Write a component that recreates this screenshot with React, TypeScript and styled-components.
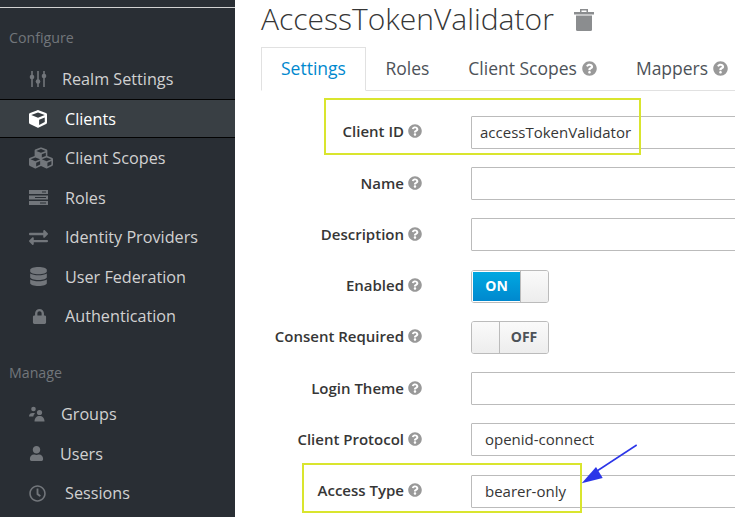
import styled, { createGlobalStyle } from "styled-components";
import type { ReactNode } from "react";
import { FaCube, FaCubes, FaDatabase, FaExchangeAlt, FaLock, FaQuestionCircle, FaRegClock, FaUser } from "react-icons/fa";

const GlobalStyle = createGlobalStyle`
	html, body {
		margin: 0;
		height: 100%;
		overflow: hidden;
		background: #fff;
	}
	body {
		font-family: "Open Sans", "Liberation Sans", sans-serif;
		color: #363636;
	}
`;

const Page = styled.div`
	position: relative;
	display: flex;
	width: 735px;
	height: 517px;
	overflow: hidden;
`;

const Sidebar = styled.aside`
	flex: 0 0 235px;
	background: #292e34;
	box-sizing: border-box;
	padding-top: 7px;
`;

const TopRule = styled.div`
	height: 1px;
	background: #d1d1d1;
`;

const SectionTitle = styled.div<{ $top: number }>`
	margin: ${({ $top }) => $top}px 0 11.3px 9px;
	height: 20px;
	line-height: 20px;
	font-size: 14.2px;
	color: #72767b;
`;

const NavRow = styled.div<{ $active?: boolean }>`
	display: flex;
	align-items: center;
	box-sizing: border-box;
	height: 39.5px;
	padding-left: 29px;
	font-size: 16.2px;
	white-space: nowrap;
	color: ${({ $active }) => ($active ? "#fff" : "#d1d1d1")};
	background: ${({ $active }) => ($active ? "#393f44" : "transparent")};
	border-top: 1px solid ${({ $active }) => ($active ? "#030303" : "transparent")};
	border-bottom: 1px solid ${({ $active }) => ($active ? "#030303" : "transparent")};
`;

const NavIcon = styled.span<{ $slot: number; $active?: boolean }>`
	display: flex;
	align-items: center;
	width: ${({ $slot }) => $slot}px;
	flex: none;
	color: ${({ $active }) => ($active ? "#fff" : "#72767b")};
`;

const Main = styled.main`
	flex: 1;
	min-width: 0;
	padding-left: 26px;
`;

const TitleRow = styled.div`
	display: flex;
	align-items: center;
	height: 38px;
	margin-bottom: 9px;
`;

const Title = styled.h1`
	margin: 0;
	font-size: 30px;
	font-weight: 300;
	line-height: 38px;
	white-space: nowrap;
	color: #363636;
`;

const TrashButton = styled.span`
	display: flex;
	margin-left: 20px;
	margin-top: 2px;
	color: #8b8d8f;
`;

const Tabs = styled.div`
	display: flex;
	height: 43px;
	border-bottom: 1px solid #e1e1e1;
`;

const Tab = styled.div<{ $active?: boolean }>`
	display: flex;
	align-items: center;
	flex: none;
	gap: 5px;
	box-sizing: border-box;
	height: ${({ $active }) => ($active ? "44px" : "43px")};
	padding: 0 ${({ $active }) => ($active ? "19px" : "18.5px")} 2px;
	font-size: 17.5px;
	white-space: nowrap;
	color: ${({ $active }) => ($active ? "#0088ce" : "#4d5258")};
	background: #fff;
	border: 1px solid ${({ $active }) => ($active ? "#e1e1e1" : "transparent")};
	border-bottom: ${({ $active }) => ($active ? "1px solid #fff" : "none")};
`;

const Form = styled.form`
	display: flex;
	flex-direction: column;
	gap: 18.25px;
	margin-top: 24.9px;
`;

const FormRow = styled.div`
	display: flex;
	align-items: center;
	height: 33px;
`;

const Label = styled.label`
	display: flex;
	align-items: center;
	justify-content: flex-end;
	gap: 4px;
	flex: 0 0 161px;
	padding-bottom: 2px;
	font-size: 15px;
	font-weight: 600;
	white-space: nowrap;
	color: #363636;
`;

const HelpIcon = styled.span`
	display: flex;
	color: #999;
`;

const Field = styled.div<{ $pad: number }>`
	box-sizing: border-box;
	flex: none;
	width: 320px;
	height: 33px;
	margin-left: 49px;
	padding-left: ${({ $pad }) => $pad}px;
	line-height: 31px;
	font-size: 15px;
	color: #363636;
	background: #fff;
	border: 1px solid #bbb;
	border-radius: 1px;
`;

const Switch = styled.div`
	display: flex;
	flex: none;
	box-sizing: border-box;
	width: 78px;
	height: 33px;
	margin-left: 49px;
	border: 1px solid #bbb;
	border-radius: 3px;
	overflow: hidden;
`;

const SwitchLabel = styled.div<{ $on?: boolean }>`
	display: flex;
	align-items: center;
	justify-content: center;
	flex: 1;
	padding-bottom: 1px;
	font-size: 14px;
	font-weight: 700;
	color: ${({ $on }) => ($on ? "#fff" : "#4d5258")};
	background: ${({ $on }) => ($on ? "linear-gradient(#00a8e1, #0088ce)" : "linear-gradient(#fafafa, #ededed)")};
	border: ${({ $on }) => ($on ? "2px solid #fff" : "none")};
	border-width: ${({ $on }) => ($on ? "1px 0 1px 1px" : "0")};
`;

const SwitchKnob = styled.div<{ $side: "left" | "right" }>`
	flex: 0 0 27px;
	background: linear-gradient(#fafafa, #ededed);
	border-${({ $side }) => ($side === "left" ? "right" : "left")}: 1px solid #bbb;
`;

const Highlight = styled.div<{ $x: number; $y: number; $w: number; $h: number }>`
	position: absolute;
	left: ${({ $x }) => $x}px;
	top: ${({ $y }) => $y}px;
	width: ${({ $w }) => $w}px;
	height: ${({ $h }) => $h}px;
	box-sizing: border-box;
	border: 2px solid #d9e52e;
	pointer-events: none;
`;

const ArrowOverlay = styled.svg`
	position: absolute;
	left: 575px;
	top: 440px;
`;

const SlidersIcon = () => (
	<svg width="18" height="18" viewBox="0 0 18 18" fill="currentColor">
		<rect x="2.2" y="1" width="1.6" height="16" />
		<rect x="8.2" y="1" width="1.6" height="16" />
		<rect x="14.2" y="1" width="1.6" height="16" />
		<circle cx="3" cy="7" r="2.3" />
		<circle cx="9" cy="11.5" r="2.3" />
		<circle cx="15" cy="6" r="2.3" />
	</svg>
);

const ServerIcon = () => (
	<svg width="19" height="15" viewBox="0 0 19 15" fill="currentColor" fillRule="evenodd">
		<path d="M0 0h19v4H0zM13 1.500v1h4v-1z" />
		<path d="M0 5.500h19v4H0zM6 7v1h11V7z" />
		<path d="M0 11h19v4H0zM11 12.500v1h6v-1z" />
	</svg>
);

const GroupsIcon = () => (
	<svg width="16" height="16" viewBox="0 0 16 16" fill="currentColor">
		<circle cx="4.500" cy="3" r="2.300" />
		<path d="M0 10.500c0-2.500 1.500-3.500 4-3.500 .8 0 1.500.1 2 .4-1 .8-1.500 1.800-1.700 3.100z" />
		<circle cx="10.500" cy="6.500" r="2.600" />
		<path d="M5.500 15.500c0-3.500 2-5.500 5-5.500s5 2 5 5.500z" />
	</svg>
);

const TrashIcon = () => (
	<svg width="20" height="22" viewBox="0 0 20 22" fill="currentColor" fillRule="evenodd">
		<path d="M6 0h8v3.500h-1.500V1.500h-5v2H6z" />
		<path d="M0 3h20v2.500H0z" />
		<path d="M2 6.500h16V20.500a1.500 1.500 0 0 1-1.500 1.500h-13A1.500 1.500 0 0 1 2 20.500z" />
	</svg>
);

type NavItem = { label: string; icon: ReactNode; slot: number; active?: boolean };

const configureItems: NavItem[] = [
	{ label: "Realm Settings", icon: <SlidersIcon />, slot: 33 },
	{ label: "Clients", icon: <FaCube size={18} />, slot: 36, active: true },
	{ label: "Client Scopes", icon: <FaCubes size={24} />, slot: 36 },
	{ label: "Roles", icon: <ServerIcon />, slot: 36 },
	{ label: "Identity Providers", icon: <FaExchangeAlt size={19} />, slot: 36 },
	{ label: "User Federation", icon: <FaDatabase size={19} />, slot: 36 },
	{ label: "Authentication", icon: <FaLock size={15} style={{ marginLeft: 3 }} />, slot: 36 },
];

const manageItems: NavItem[] = [
	{ label: "Groups", icon: <GroupsIcon />, slot: 32 },
	{ label: "Users", icon: <FaUser size={15} />, slot: 31 },
	{ label: "Sessions", icon: <FaRegClock size={17} />, slot: 36 },
];

const Help = () => (
	<HelpIcon>
		<FaQuestionCircle size={14} />
	</HelpIcon>
);

const NavList = ({ items }: { items: NavItem[] }) => (
	<>
		{items.map((item) => (
			<NavRow key={item.label} $active={item.active}>
				<NavIcon $slot={item.slot} $active={item.active}>
					{item.icon}
				</NavIcon>
				{item.label}
			</NavRow>
		))}
	</>
);

const App = () => {
	return (
		<Page>
			<GlobalStyle />
			<Sidebar>
				<TopRule />
				<SectionTitle $top={20}>Configure</SectionTitle>
				<NavList items={configureItems} />
				<SectionTitle $top={27.2}>Manage</SectionTitle>
				<NavList items={manageItems} />
			</Sidebar>
			<Main>
				<TitleRow>
					<Title>AccessTokenValidator</Title>
					<TrashButton>
						<TrashIcon />
					</TrashButton>
				</TitleRow>
				<Tabs>
					<Tab $active>Settings</Tab>
					<Tab>Roles</Tab>
					<Tab>
						Client Scopes <FaQuestionCircle size={15} color="#999" />
					</Tab>
					<Tab>
						Mappers <FaQuestionCircle size={15} color="#999" />
					</Tab>
				</Tabs>
				<Form>
					<FormRow>
						<Label>
							Client ID <Help />
						</Label>
						<Field $pad={8}>accessTokenValidator</Field>
					</FormRow>
					<FormRow>
						<Label>
							Name <Help />
						</Label>
						<Field $pad={8} />
					</FormRow>
					<FormRow>
						<Label>
							Description <Help />
						</Label>
						<Field $pad={8} />
					</FormRow>
					<FormRow>
						<Label>
							Enabled <Help />
						</Label>
						<Switch>
							<SwitchLabel $on>ON</SwitchLabel>
							<SwitchKnob $side="right" />
						</Switch>
					</FormRow>
					<FormRow>
						<Label>
							Consent Required <Help />
						</Label>
						<Switch>
							<SwitchKnob $side="left" />
							<SwitchLabel>OFF</SwitchLabel>
						</Switch>
					</FormRow>
					<FormRow>
						<Label>
							Login Theme <Help />
						</Label>
						<Field $pad={8} />
					</FormRow>
					<FormRow>
						<Label>
							Client Protocol <Help />
						</Label>
						<Field $pad={13}>openid-connect</Field>
					</FormRow>
					<FormRow>
						<Label>
							Access Type <Help />
						</Label>
						<Field $pad={13}>bearer-only</Field>
					</FormRow>
				</Form>
			</Main>
			<Highlight $x={324} $y={98} $w={317} $h={57} />
			<Highlight $x={302} $y={463} $w={280} $h={50} />
			<ArrowOverlay width="70" height="50" viewBox="0 0 70 50">
				<line x1="61.7" y1="5" x2="22" y2="31" stroke="#2b35e8" strokeWidth="1.5" />
				<polygon points="6.700,43.300 21,27 27.700,38" fill="#2b35e8" />
			</ArrowOverlay>
		</Page>
	);
};

export default App;
